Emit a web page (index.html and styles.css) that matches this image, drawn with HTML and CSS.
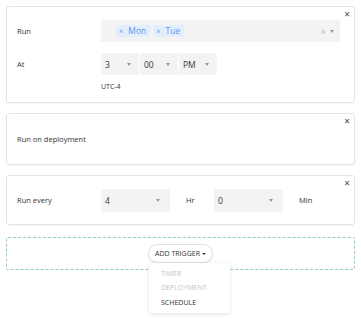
FILE: index.html
```html
<!DOCTYPE html>
<html lang="en">

<head>
    <meta charset="UTF-8">
    <meta name="viewport" content="width=device-width, initial-scale=1.0">
    <title>Triggers</title>
    <link rel="stylesheet" href="styles.css">
</head>

<body>

    <div class="triggers">

        <!-- Schedule trigger -->
        <div class="card card-schedule">
            <span class="close">&times;</span>
            <div class="row">
                <div class="label">Run</div>
                <div class="multi">
                    <span class="tag"><span class="tag-x">&times;</span>Mon</span>
                    <span class="tag"><span class="tag-x">&times;</span>Tue</span>
                    <span class="multi-tools"><span class="clear">&times;</span><span class="caret"></span></span>
                </div>
            </div>
            <div class="row row-time">
                <div class="label">At</div>
                <div class="time">
                    <div class="select sm"><span>3</span><span class="caret"></span></div>
                    <div class="select sm"><span>00</span><span class="caret"></span></div>
                    <div class="select sm"><span>PM</span><span class="caret"></span></div>
                </div>
            </div>
            <div class="tz">UTC-4</div>
        </div>

        <!-- Deployment trigger -->
        <div class="card card-deploy">
            <span class="close">&times;</span>
            <div class="label">Run on deployment</div>
        </div>

        <!-- Timer trigger -->
        <div class="card card-timer">
            <span class="close">&times;</span>
            <div class="label">Run every</div>
            <div class="select md"><span>4</span><span class="caret"></span></div>
            <div class="unit">Hr</div>
            <div class="select md"><span>0</span><span class="caret"></span></div>
            <div class="unit">Min</div>
        </div>

        <!-- Add trigger -->
        <div class="add-box">
            <div class="add-wrap">
                <button class="add-btn">ADD TRIGGER <span class="btn-caret"></span></button>
                <ul class="menu">
                    <li class="disabled">TIMER</li>
                    <li class="disabled">DEPLOYMENT</li>
                    <li>SCHEDULE</li>
                </ul>
            </div>
        </div>

    </div>

</body>

</html>
```

FILE: styles.css
```css
/* Reset */
* {
    margin: 0;
    padding: 0;
    box-sizing: border-box;
}

html {
    height: 100%;
}

body {
    font-family: "Open Sans", "Liberation Sans", sans-serif;
    font-size: 7.5px;
    color: #333;
    background-color: white;
    padding: 6px;
    width: 361px;
    min-height: 318px;
}

.triggers {
    display: flex;
    flex-direction: column;
    gap: 10px;
    width: 349px;
}

/* Cards */
.card {
    position: relative;
    border: 1px solid #e4e4e4;
    border-radius: 3px;
    box-shadow: 0 1px 2px rgba(0, 0, 0, 0.04);
    padding: 0 14px 0 10px;
}

.close {
    position: absolute;
    top: 2px;
    right: 4px;
    font-size: 10px;
    line-height: 10px;
    color: #444;
}

.label {
    width: 84px;
    flex-shrink: 0;
}

.row {
    display: flex;
    align-items: center;
}

.card-schedule {
    padding-top: 13px;
    padding-bottom: 10px;
}

.row-time {
    margin-top: 11px;
}

.tz {
    margin: 7px 0 0 84px;
    font-size: 7px;
    line-height: 10px;
}

/* Multi select */
.multi {
    flex: 1;
    height: 22px;
    background-color: #f3f3f3;
    border-radius: 2px;
    display: flex;
    align-items: center;
    padding-left: 15px;
    gap: 3px;
}

.tag {
    background-color: #e3edfb;
    color: #5b97ea;
    font-size: 8.5px;
    height: 12px;
    line-height: 12px;
    padding: 0 4px 0 3px;
    border-radius: 1px;
}

.tag-x {
    font-size: 7.5px;
    margin-right: 5px;
}

.multi-tools {
    margin-left: auto;
    display: flex;
    align-items: center;
    gap: 4px;
    padding-right: 6px;
}

.clear {
    color: #bbb;
    font-size: 9px;
}

.caret {
    display: inline-block;
    border-left: 2.5px solid transparent;
    border-right: 2.5px solid transparent;
    border-top: 3px solid #999;
}

/* Selects */
.time {
    display: flex;
    gap: 1px;
}

.select {
    background-color: #f3f3f3;
    border-radius: 2px;
    display: flex;
    align-items: center;
    justify-content: space-between;
    font-size: 8.5px;
    padding: 0 8px 0 4px;
}

.select.sm {
    width: 38px;
    height: 22px;
}

.select.md {
    width: 69px;
    height: 23px;
    padding-right: 10px;
}

/* Deployment */
.card-deploy {
    height: 52px;
    display: flex;
    align-items: center;
}

/* Timer */
.card-timer {
    height: 50px;
    display: flex;
    align-items: center;
}

.unit {
    width: 44px;
    padding-left: 16px;
}

/* Add trigger */
.add-box {
    margin-top: 2px;
    height: 33px;
    border: 1px dashed #8fcfb6;
    border-radius: 2px;
    display: flex;
    align-items: center;
    justify-content: center;
}

.add-wrap {
    position: relative;
}

.add-btn {
    font-family: "Open Sans", "Liberation Sans", sans-serif;
    font-size: 7px;
    color: #333;
    background-color: white;
    border: 1px solid #e2e2e2;
    border-radius: 10px;
    height: 19px;
    width: 65px;
    box-shadow: 0 1px 2px rgba(0, 0, 0, 0.08);
    display: flex;
    align-items: center;
    justify-content: center;
    gap: 2px;
}

.btn-caret {
    display: inline-block;
    border-left: 2px solid transparent;
    border-right: 2px solid transparent;
    border-top: 2.5px solid #333;
}

.menu {
    position: absolute;
    top: 19px;
    left: 1px;
    width: 81px;
    list-style: none;
    background-color: white;
    box-shadow: 0 1px 4px rgba(0, 0, 0, 0.12);
    border-radius: 2px;
    padding: 4px 0 3px;
}

.menu li {
    font-size: 7px;
    line-height: 14.3px;
    padding-left: 12px;
    color: #333;
}

.menu li.disabled {
    color: #c4c4c4;
}
```
